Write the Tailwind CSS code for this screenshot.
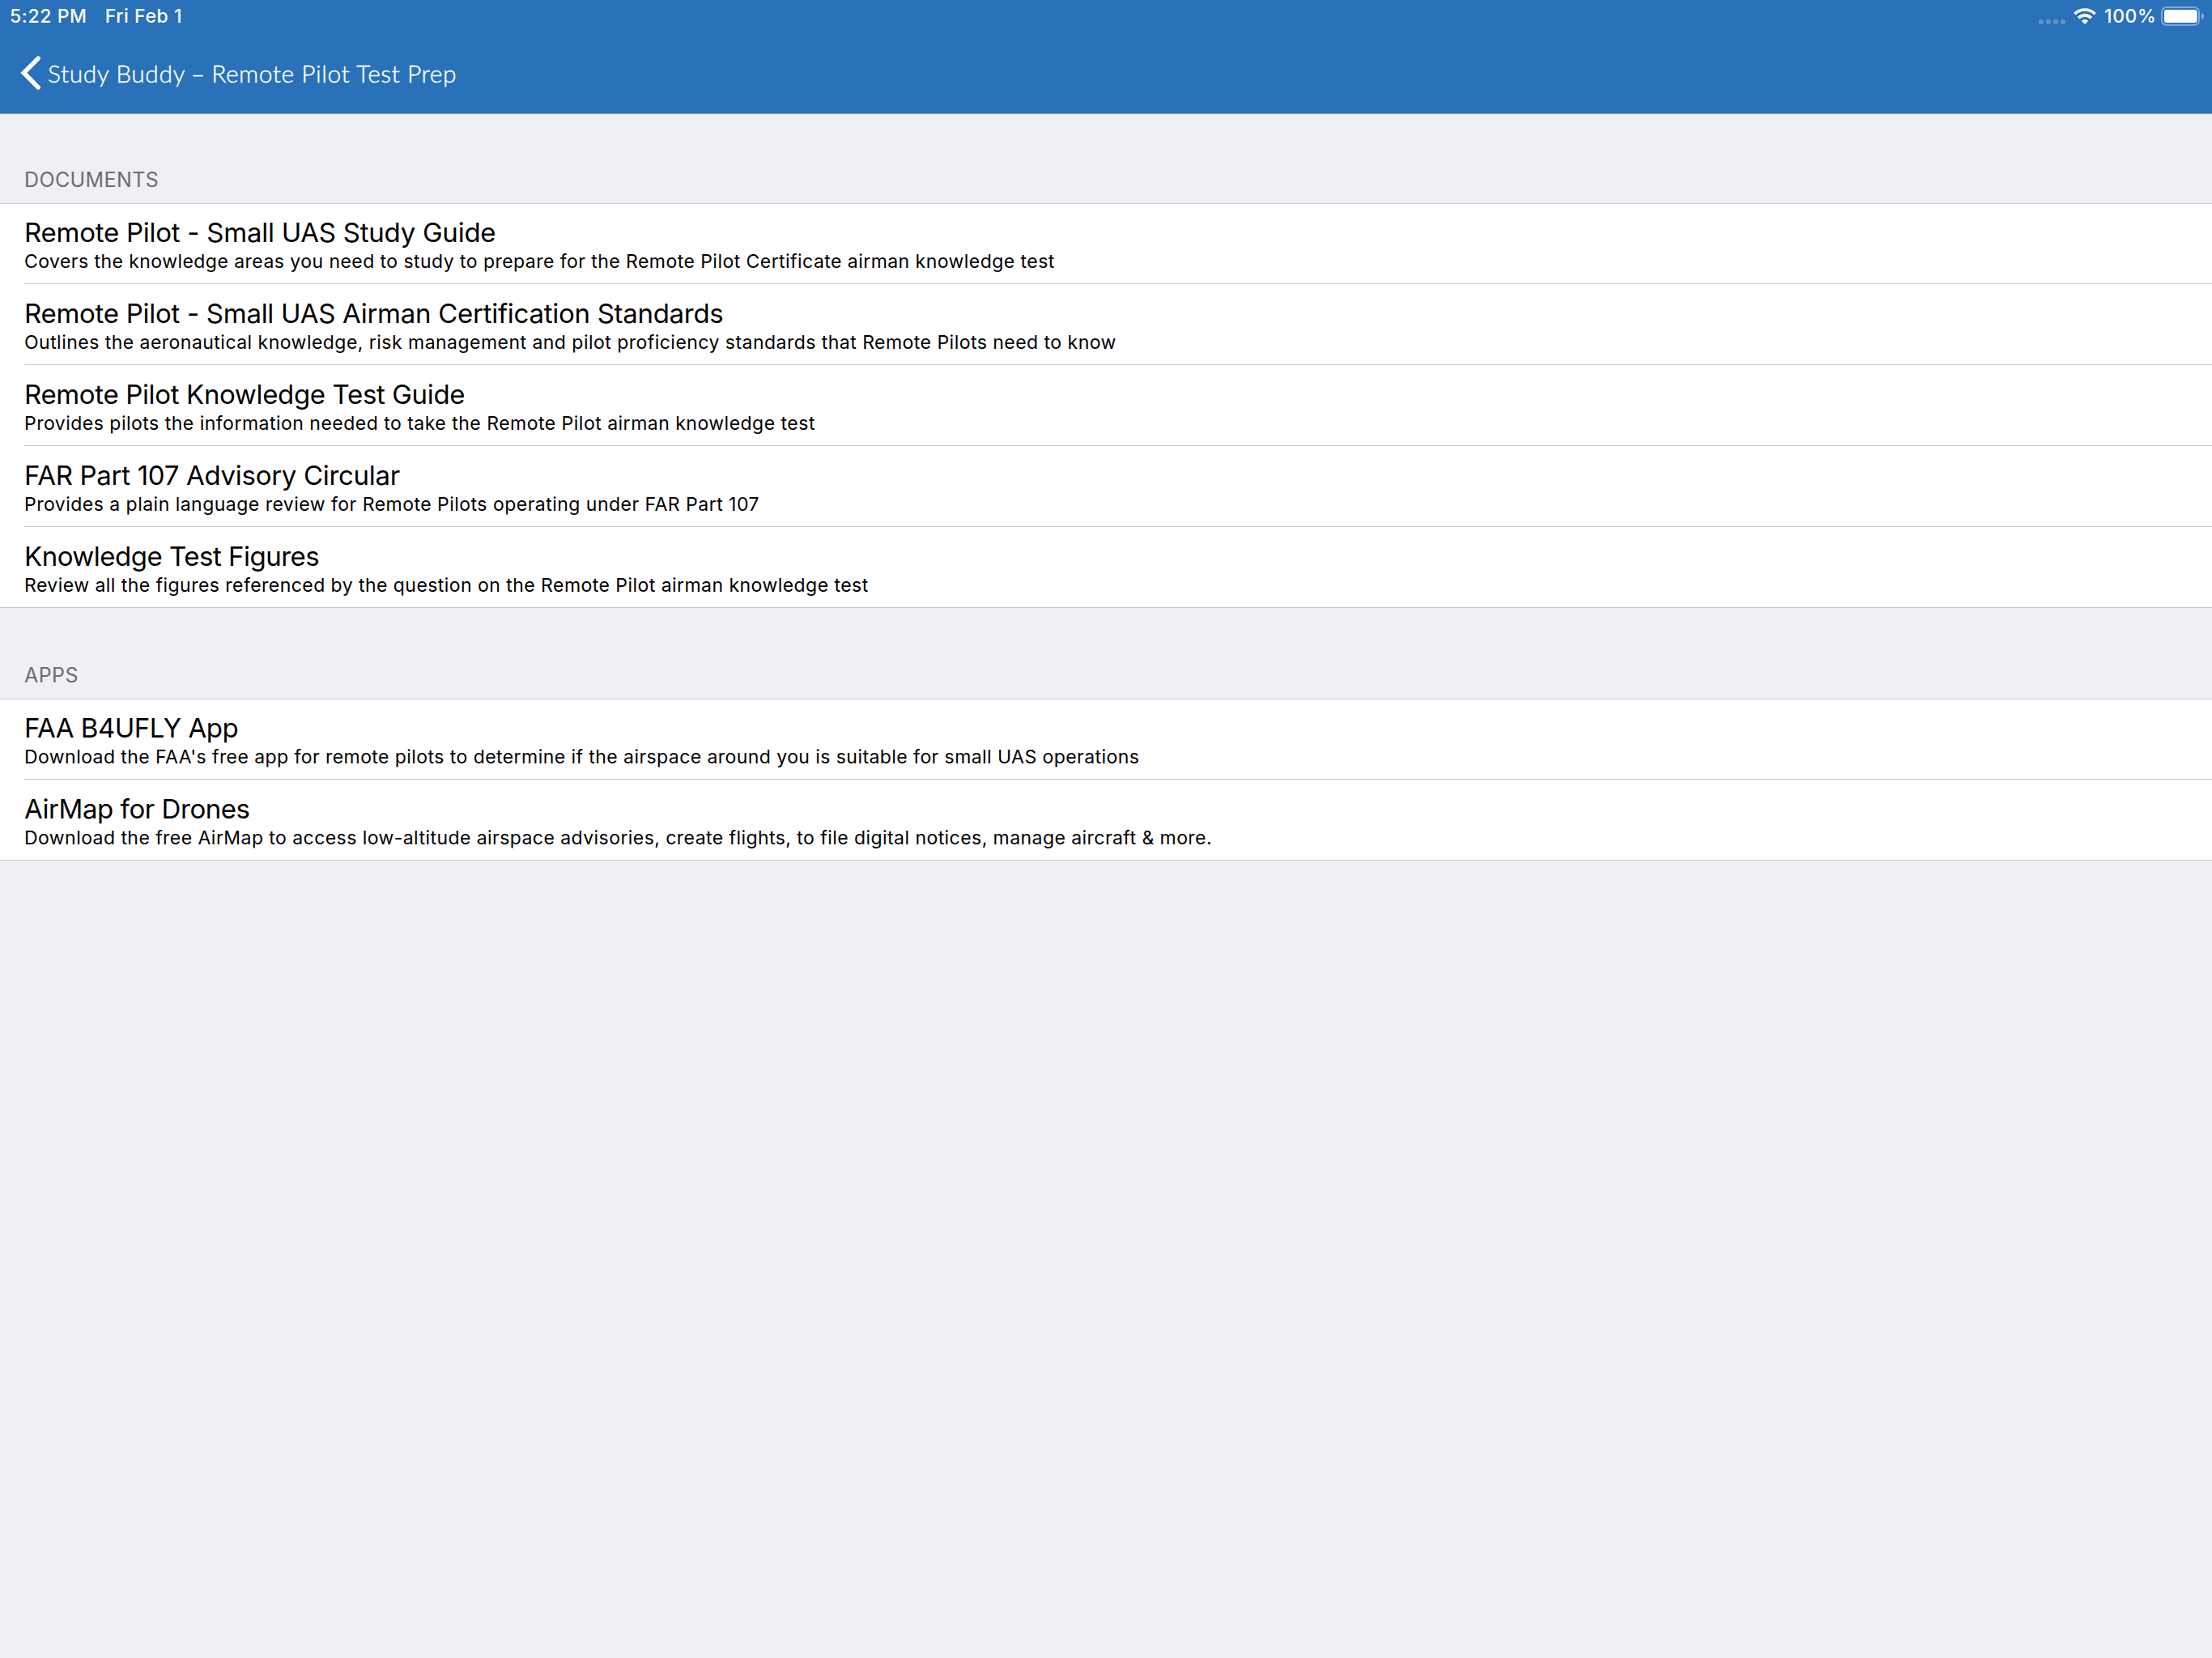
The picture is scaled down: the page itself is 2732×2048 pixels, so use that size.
<!DOCTYPE html>
<html lang="en">
<head>
    <meta charset="UTF-8">
    <meta name="viewport" content="width=device-width, initial-scale=1.0">
    <title>Study Buddy - Remote Pilot Test Prep</title>
    <script src="https://cdn.jsdelivr.net/npm/@tailwindcss/browser@4"></script>
</head>
<body class="min-h-screen bg-[#efeff4] font-['Inter',sans-serif] text-black">

    <!-- Header -->
    <header class="h-[141px] bg-[#2971b9] border-b border-[#a2a3a9] text-white">
        <!-- Status Bar -->
        <div class="h-10 flex items-center justify-between pl-[12px] pr-[10px] text-[23px] leading-[40px] font-medium">
            <div class="flex gap-[22px]">
                <span class="tracking-[0.6px]">5:22 PM</span>
                <span class="tracking-[0.6px]">Fri Feb 1</span>
            </div>
            <div class="flex items-center">
                <!-- Signal Dots -->
                <div class="flex gap-[3px] mr-[10px] mt-[14px]">
                    <span class="size-[6px] rounded-[2px] bg-white/25"></span>
                    <span class="size-[6px] rounded-[2px] bg-white/25"></span>
                    <span class="size-[6px] rounded-[2px] bg-white/25"></span>
                    <span class="size-[6px] rounded-[2px] bg-white/25"></span>
                </div>
                <!-- Wifi Icon SVG -->
                <svg class="w-7 h-5" viewBox="0 0 28 20" fill="none" stroke="currentColor" stroke-width="3.6">
                    <path d="M1.4 7.2A18 18 0 0 1 26.6 7.2"></path>
                    <path d="M6.1 12.1A11.2 11.2 0 0 1 21.9 12.1"></path>
                    <path d="M14 20L9.8 15.8A6 6 0 0 1 18.2 15.8Z" fill="currentColor" stroke="none"></path>
                </svg>
                <span class="w-[70px] ml-[10px] tracking-[0.6px]">100%</span>
                <!-- Battery Icon SVG -->
                <svg class="w-[53px] h-6" viewBox="0 0 53 24" fill="currentColor">
                    <rect x="1" y="1" width="46" height="22" rx="6" fill="none" stroke="currentColor" stroke-width="2" stroke-opacity="0.4"></rect>
                    <rect x="4" y="4" width="40.5" height="16" rx="3"></rect>
                    <path d="M50 8C52 9 53 10.4 53 12C53 13.6 52 15 50 16Z" fill-opacity="0.45"></path>
                </svg>
            </div>
        </div>
        <!-- Navigation Bar -->
        <nav class="h-[100px] flex items-center pl-[25px]">
            <svg class="w-[26px] h-[42px]" viewBox="0 0 26 42" fill="none" stroke="currentColor" stroke-width="5.6" stroke-linecap="round" stroke-linejoin="miter"><path d="M22.1 3.1L4.4 21L22.1 38.9"></path></svg>
            <a href="#" class="ml-[8px] font-['Lato',sans-serif] font-light text-[30px] tracking-[0.52px] [-webkit-text-stroke:0.4px_white]">Study Buddy <span class="-mx-[1.2px]">–</span> Remote Pilot Test Prep</a>
        </nav>
    </header>

    <main>
        <!-- Documents Section -->
        <h2 class="h-[110px] flex items-end pl-[30px] pb-[9px] text-[25px] leading-[40px] tracking-[0.4px] text-[#6d6d72]">DOCUMENTS</h2>
        <ul class="bg-white border-y border-[#c8c7cc] pl-[30px]">
            <li class="h-[99px] pt-[15px] border-b border-[#c8c7cc]">
                <p class="text-[33px] leading-[40px] tracking-[-0.25px]">Remote Pilot - Small UAS Study Guide</p>
                <p class="text-[23px] leading-[32px] tracking-[0.45px]">Covers the knowledge areas you need to study to prepare for the Remote Pilot Certificate airman knowledge test</p>
            </li>
            <li class="h-[100px] pt-[16px] border-b border-[#c8c7cc]">
                <p class="text-[33px] leading-[40px] tracking-[-0.28px]">Remote Pilot - Small UAS Airman Certification Standards</p>
                <p class="text-[23px] leading-[32px] tracking-[0.47px]">Outlines the aeronautical knowledge, risk management and pilot proficiency standards that Remote Pilots need to know</p>
            </li>
            <li class="h-[100px] pt-[16px] border-b border-[#c8c7cc]">
                <p class="text-[33px] leading-[40px] tracking-[-0.35px]">Remote Pilot Knowledge Test Guide</p>
                <p class="text-[23px] leading-[32px] tracking-[0.49px]">Provides pilots the information needed to take the Remote Pilot airman knowledge test</p>
            </li>
            <li class="h-[100px] pt-[16px] border-b border-[#c8c7cc]">
                <p class="text-[33px] leading-[40px] tracking-[-0.3px]">FAR Part 107 Advisory Circular</p>
                <p class="text-[23px] leading-[32px] tracking-[0.48px]">Provides a plain language review for Remote Pilots operating under FAR Part 107</p>
            </li>
            <li class="h-[99px] pt-[16px]">
                <p class="text-[33px] leading-[40px] tracking-[-0.5px]">Knowledge Test Figures</p>
                <p class="text-[23px] leading-[32px] tracking-[0.455px]">Review all the figures referenced by the question on the Remote Pilot airman knowledge test</p>
            </li>
        </ul>

        <!-- Apps Section -->
        <h2 class="h-[112px] flex items-end pl-[30px] pb-[9px] text-[25px] leading-[40px] tracking-[0.4px] text-[#6d6d72]">APPS</h2>
        <ul class="bg-white border-y border-[#c8c7cc] pl-[30px]">
            <li class="h-[99px] pt-[15px] border-b border-[#c8c7cc]">
                <p class="text-[33px] leading-[40px] tracking-[-0.5px]">FAA B4UFLY App</p>
                <p class="text-[23px] leading-[32px] tracking-[0.435px]">Download the FAA's free app for remote pilots to determine if the airspace around you is suitable for small UAS operations</p>
            </li>
            <li class="h-[99px] pt-[16px]">
                <p class="text-[33px] leading-[40px] tracking-[-0.44px]">AirMap for Drones</p>
                <p class="text-[23px] leading-[32px] tracking-[0.44px]">Download the free AirMap to access low-altitude airspace advisories, create flights, to file digital notices, manage aircraft &amp; more.</p>
            </li>
        </ul>
    </main>

</body>
</html>
